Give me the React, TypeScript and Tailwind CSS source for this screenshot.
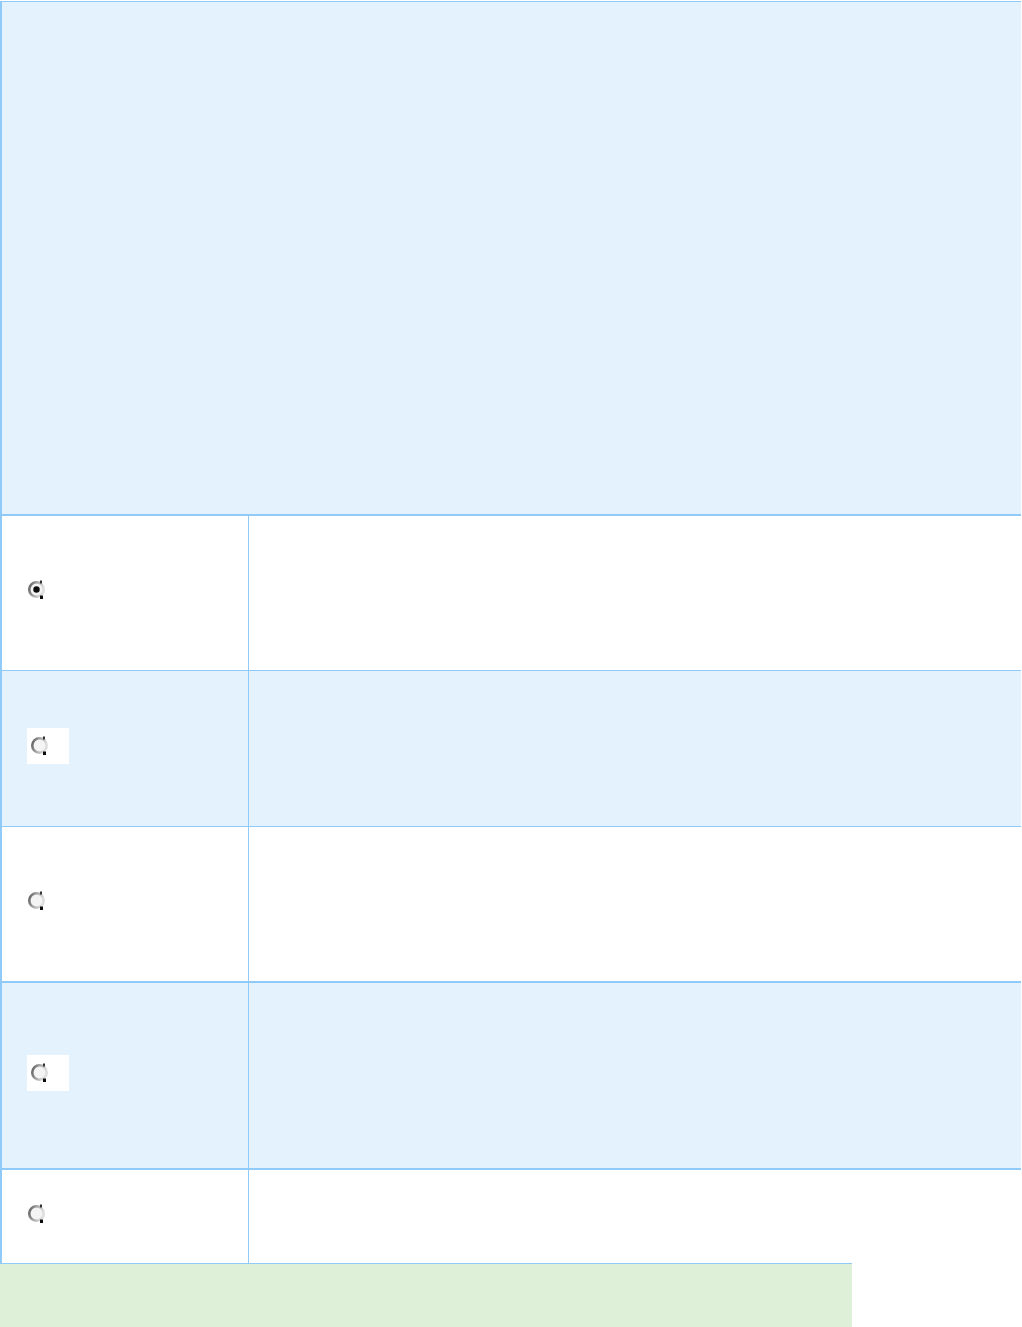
import React, { useState } from "react";

interface OptionRow {
  id: string;
  heightClass: string;
  shaded: boolean;
  boxed: boolean;
  borderTop: string;
}

const rows: OptionRow[] = [
  { id: "a", heightClass: "h-[154px]", shaded: false, boxed: false, borderTop: "" },
  { id: "b", heightClass: "h-[156px]", shaded: true, boxed: true, borderTop: "border-t" },
  { id: "c", heightClass: "h-[155px]", shaded: false, boxed: false, borderTop: "border-t" },
  { id: "d", heightClass: "h-[187px]", shaded: true, boxed: true, borderTop: "border-t-2" },
  { id: "e", heightClass: "h-[95px]", shaded: false, boxed: false, borderTop: "border-t-2" },
];

const RadioMark: React.FC<{ checked: boolean }> = ({ checked }) => (
  <svg width="20" height="22" viewBox="0 0 20 22" className="block">
    <defs>
      <linearGradient id="ring" x1="0" y1="0" x2="1" y2="0.3">
        <stop offset="0" stopColor="#5c5c5c" />
        <stop offset="0.5" stopColor="#a8a8a8" />
        <stop offset="1" stopColor="#dedede" />
      </linearGradient>
    </defs>
    <circle cx="9.5" cy="10.5" r="7.2" fill="#f4f4f4" stroke="url(#ring)" strokeWidth="2.6" />
    {checked && <circle cx="9.5" cy="10.5" r="3.2" fill="#0c0c0c" />}
    <rect x="13" y="16.5" width="3" height="3.5" fill="#0c0c0c" />
    <rect x="13" y="1.5" width="2" height="3" fill="#333" />
  </svg>
);

const App: React.FC = () => {
  const [selected, setSelected] = useState("a");

  return (
    <div className="w-[1022px] min-h-[1327px] bg-white pt-px font-['Liberation_Sans',sans-serif]">
      <div className="w-[1021px] border-l-2 border-t border-[#90caf9]">
        {/* Header panel */}
        <div className="h-[514px] bg-[#e3f2fd] border-b-2 border-[#90caf9]" />

        {/* Option rows */}
        {rows.map((row) => (
          <div
            key={row.id}
            className={`flex ${row.heightClass} ${row.borderTop} border-[#90caf9] ${
              row.shaded ? "bg-[#e3f2fd]" : "bg-white"
            }`}
          >
            <div className="w-[247px] shrink-0 border-r border-[#90caf9] flex items-center pl-[25px]">
              <button
                type="button"
                onClick={() => setSelected(row.id)}
                className={`mb-[6px] flex items-center ${
                  row.boxed ? "bg-white w-[42px] h-[36px] pl-[3px]" : ""
                }`}
              >
                <RadioMark checked={selected === row.id} />
              </button>
            </div>
            <div className="flex-1" />
          </div>
        ))}
      </div>

      {/* Footer bar */}
      <div className="w-[852px] h-[64px] bg-[#dff0d8] border-t border-[#90caf9]" />
    </div>
  );
};

export default App;
